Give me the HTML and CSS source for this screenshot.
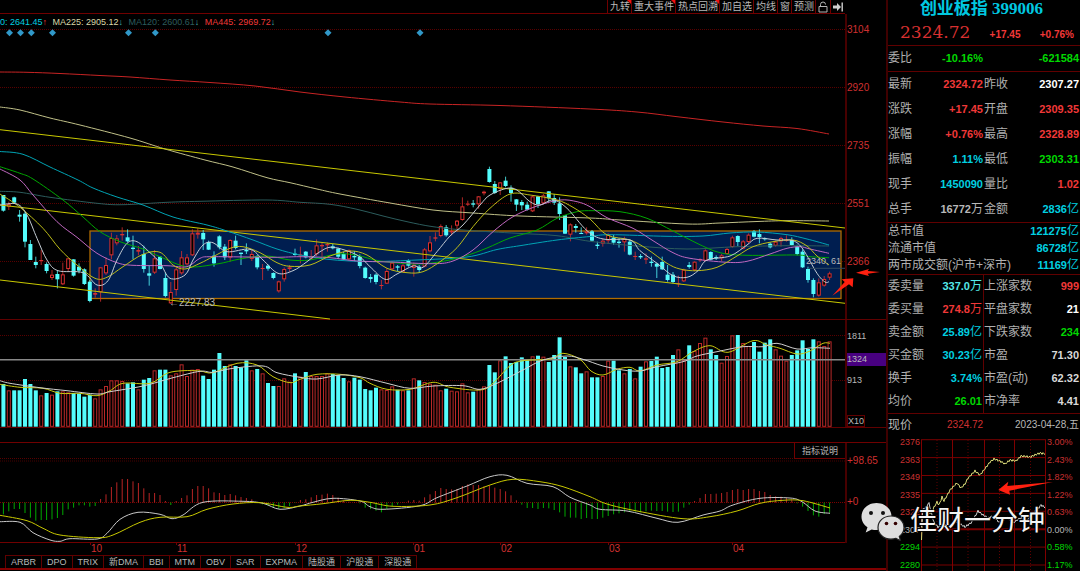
FILE: index.html
```html
<!DOCTYPE html>
<html lang="zh-CN">
<head>
<meta charset="utf-8">
<title>创业板指 399006</title>
<link rel="stylesheet" href="styles.css">
</head>
<body>
<div class="terminal">
  <main class="charts">
    <nav class="toolbar">
      <button class="tool flagged">九转</button>
      <button class="tool flagged">重大事件</button>
      <button class="tool flagged">热点回溯</button>
      <button class="tool">加自选</button>
      <button class="tool">均线</button>
      <button class="tool">窗</button>
      <button class="tool">预测</button>
      <button class="tool tool-icon" aria-label="锁定"><svg class="icon" viewBox="0 0 10 12"><path d="M1 5.5h8v5.5h-8zM2.5 5.5v-2a2.5 2.5 0 0 1 5 0" fill="none" stroke="#b4b4b4"/></svg></button>
      <button class="tool tool-icon" aria-label="末端"><svg class="icon" viewBox="0 0 10 12"><path d="M0 4.5h4V2l4 4-4 4V7.500H0z" fill="#d0d0d0"/><path d="M9.200 1.500v9" stroke="#d0d0d0" stroke-width="1.400"/></svg></button>
    </nav>

    <section class="panel price-panel">
      <div class="plot">
        <svg id="price" class="price-svg" viewBox="0 14 845 305" preserveAspectRatio="none"></svg>
        <div class="legend">
          <span class="cyan">0: 2641.45<i class="up">↑</i></span>
          <span class="cream">MA225: 2905.12<i>↓</i></span>
          <span class="teal">MA120: 2600.61<i>↓</i></span>
          <span class="red">MA445: 2969.72<i>↓</i></span>
        </div>
        <span class="mark mark-low">←2227.83</span>
        <span class="mark mark-last">2340, 61</span>
      </div>
      <div class="axis price-axis"><span>3104</span><span>2920</span><span>2735</span><span>2551</span><span>2366</span></div>
    </section>

    <section class="panel volume-panel">
      <div class="plot"><svg id="volume" class="volume-svg" viewBox="0 320 845 107" preserveAspectRatio="none"></svg></div>
      <div class="axis volume-axis"><span>1811</span><span class="current">1324</span><span>913</span><span class="unit">X10</span></div>
    </section>

    <div class="spacer"></div>

    <section class="panel macd-panel">
      <div class="plot">
        <svg id="macd" class="macd-svg" viewBox="0 443 845 99" preserveAspectRatio="none"></svg>
        <button class="explain">指标说明</button>
      </div>
      <div class="axis macd-axis"><span>+98.65</span><span>+0</span></div>
    </section>

    <div class="months"><span></span><span>10</span><span>11</span><span>12</span><span>01</span><span>02</span><span>03</span><span>04</span></div>

    <nav class="tabs">
      <button class="tab">ARBR</button><button class="tab">DPO</button><button class="tab">TRIX</button><button class="tab">新DMA</button><button class="tab">BBI</button><button class="tab">MTM</button><button class="tab">OBV</button><button class="tab">SAR</button><button class="tab">EXPMA</button><button class="tab">陆股通</button><button class="tab">沪股通</button><button class="tab">深股通</button>
    </nav>
  </main>

  <aside class="quote">
    <header class="head">
      <h1 class="name">创业板指 399006</h1>
      <div class="last"><strong class="price">2324.72</strong><span>+17.45</span><span>+0.76%</span></div>
    </header>
    <table class="facts tall">
      <tr><th>委比</th><td class="green">-10.16%</td><th></th><td class="green">-621584</td></tr>
    </table>
    <table class="facts tall">
      <tr><th>最新</th><td class="red">2324.72</td><th>昨收</th><td class="white">2307.27</td></tr>
      <tr><th>涨跌</th><td class="red">+17.45</td><th>开盘</th><td class="red">2309.35</td></tr>
      <tr><th>涨幅</th><td class="red">+0.76%</td><th>最高</th><td class="red">2328.89</td></tr>
      <tr><th>振幅</th><td class="cyan">1.11%</td><th>最低</th><td class="green">2303.31</td></tr>
      <tr><th>现手</th><td class="cyan">1450090</td><th>量比</th><td class="red">1.02</td></tr>
      <tr><th>总手</th><td class="grey">16772<em>万</em></td><th>金额</th><td class="cyan">2836<em>亿</em></td></tr>
    </table>
    <table class="facts short">
      <tr><th colspan="3">总市值</th><td class="cyan">121275<em>亿</em></td></tr>
      <tr><th colspan="3">流通市值</th><td class="cyan">86728<em>亿</em></td></tr>
      <tr><th colspan="3">两市成交额(沪市+深市)</th><td class="cyan">11169<em>亿</em></td></tr>
    </table>
    <table class="facts medium split">
      <tr><th>委卖量</th><td class="aqua">337.0<em>万</em></td><th>上涨家数</th><td class="red">999</td></tr>
      <tr><th>委买量</th><td class="red">274.8<em>万</em></td><th>平盘家数</th><td class="white">21</td></tr>
      <tr><th>卖金额</th><td class="cyan">25.89<em>亿</em></td><th>下跌家数</th><td class="green">234</td></tr>
      <tr><th>买金额</th><td class="cyan">30.23<em>亿</em></td><th>市盈</th><td class="pale">71.30</td></tr>
      <tr><th>换手</th><td class="cyan">3.74%</td><th>市盈(动)</th><td class="pale">62.32</td></tr>
      <tr><th>均价</th><td class="green">26.01</td><th>市净率</th><td class="pale">4.41</td></tr>
    </table>
    <div class="now"><span>现价</span><span class="now-price">2324.72</span><time class="date">2023-04-28,五</time></div>
    <div class="mini">
      <div class="scale"><span>2376</span><span>2363</span><span>2349</span><span>2335</span><span>2322</span><span class="grey">2307</span><span class="green">2294</span><span class="green">2280</span></div>
      <svg id="intraday" class="mini-svg" viewBox="921 436 125 135" preserveAspectRatio="none"></svg>
      <div class="scale percent"><span>3.00%</span><span>2.43%</span><span>1.82%</span><span>1.22%</span><span>0.63%</span><span class="grey">0.00%</span><span class="green">0.58%</span><span class="green">1.17%</span></div>
      <div class="watermark">
        <svg class="wechat" viewBox="861 501 44 39">
          <path d="M876.500 502c-8.500 0-15 6-15 13.500 0 4.500 2.300 8.300 6 10.800l-1.800 5.200 6-3c1.500.400 3 .600 4.800.600 8.500 0 15-6 15-13.600S885 502 876.500 502z" fill="#dedede"/>
          <circle cx="871" cy="512" r="2" fill="#111"/><circle cx="883" cy="512" r="2" fill="#111"/>
          <path d="M891 515c-7.500 0-13 5.200-13 11.500s5.500 11.700 13 11.700c1.800 0 3.500-.300 5-.800l4.500 2.300-1.200-4.200c3-2.200 4.700-5.400 4.700-9 0-6.300-5.500-11.500-13-11.500z" fill="#dedede" stroke="#222" stroke-width="1.200"/>
          <circle cx="886.500" cy="522.500" r="1.800" fill="#300"/><circle cx="895.500" cy="522.500" r="1.800" fill="#300"/>
        </svg>
        <span>佳财一分钟</span>
      </div>
    </div>
  </aside>
</div>
<script src="charts.js"></script>
</body>
</html>
```
FILE: styles.css
```css
* { box-sizing: border-box; }
body {
  margin: 0;
  background: #000;
  color: #b8b8b8;
  font: 9px/12px "Liberation Sans", "Noto Sans CJK SC", sans-serif;
}
button {
  margin: 0;
  padding: 0;
  border: 0;
  background: none;
  color: inherit;
  font: inherit;
}
svg { display: block; }

.terminal { display: flex; min-height: 100vh; }
.charts { flex: 1; min-width: 0; }
.quote { flex: none; width: 194px; border-left: 2px solid #400000; }

.red { color: #f03838; }
.green { color: #00d800; }
.cyan { color: #00d0e0; }
.aqua { color: #54e8e8; }
.white { color: #fff; }
.pale { color: #d8d8d8; }
.grey { color: #b8b8b8; }
.cream { color: #d8d8a8; }
.teal { color: #2c5c5c; }

.toolbar {
  display: flex;
  justify-content: flex-end;
  height: 14px;
  margin-right: 41px;
  border-bottom: 1px solid #700000;
}
.tool {
  position: relative;
  padding: 0 1px 0 2px;
  border-left: 1px solid #700000;
  font-size: 10px;
  line-height: 12px;
  white-space: nowrap;
}
.tool-icon { padding: 0 2px; }
.flagged::after {
  content: "";
  position: absolute;
  top: 0;
  right: 0;
  border-top: 4px solid #f01010;
  border-left: 4px solid transparent;
}
.icon { width: 10px; height: 12px; }

.panel { display: flex; border-bottom: 1px solid #600000; }
.plot { position: relative; z-index: 1; flex: 1; min-width: 0; }
.plot > svg { width: 100%; }
.price-svg { height: 305px; overflow: visible; }
.volume-svg { height: 107px; }
.macd-svg { height: 99px; }
.axis {
  display: flex;
  flex-direction: column;
  flex: none;
  align-items: flex-start;
  width: 41px;
  border-left: 2px solid #480000;
  color: #d03030;
  font-size: 10px;
}
.price-axis { gap: 46px; padding-top: 10px; }
.volume-axis { padding-top: 10px; color: #b8b8b8; font-size: 9px; }
.current {
  align-self: stretch;
  margin: 11px 0 8px;
  background: #480080;
  line-height: 13px;
}
.unit { margin-top: auto; border: 1px solid #600000; line-height: 10px; }
.macd-panel { border-bottom: 0; }
.macd-axis { gap: 29px; padding-top: 12px; }
.macd-panel .plot { border-bottom: 1px solid #700000; }
.spacer { height: 15px; border-bottom: 1px solid #700000; }

.legend { position: absolute; top: 2px; left: 0; display: flex; gap: 5px; white-space: nowrap; }
.legend i { display: inline-block; width: 5px; color: #40b0b0; font-style: normal; }
.legend .up { color: #f03838; }
.mark { position: absolute; font-size: 10px; color: #b8b8b8; }
.mark-low { top: 283px; left: 20%; }
.mark-last { top: 241px; right: 4px; font-size: 9px; }
.explain {
  position: absolute;
  top: 0;
  right: 0;
  width: 51px;
  height: 16px;
  border: 1px solid #700000;
  border-top: 0;
  border-right: 0;
  background: #000;
}

.months {
  display: grid;
  grid-template-columns: 90fr 86fr 119fr 118fr 87fr 108fr 124fr 113fr;
  height: 12px;
  margin-right: 41px;
  color: #d03030;
  font-size: 10px;
}
.months span { position: relative; padding-left: 1px; }
.months span + span::before {
  content: "";
  position: absolute;
  top: 0;
  left: 0;
  height: 2px;
  border-left: 1px solid #700000;
}
.tabs { display: flex; height: 15px; padding-left: 5px; border-bottom: 2px solid #800000; }
.tab { padding: 0 5px; border: 1px solid #600000; border-width: 1px 0 0 1px; white-space: nowrap; }
.tab:last-child { border-right-width: 1px; }

.head { height: 45px; text-align: center; }
.name {
  margin: 0;
  padding-right: 5px;
  color: #00c8e0;
  font: bold 17px/18px "Liberation Serif", "Noto Sans CJK SC", serif;
  white-space: nowrap;
}
.last {
  display: flex;
  align-items: baseline;
  justify-content: space-between;
  padding: 0 6px 0 12px;
  color: #f03838;
  font: bold 10px/28px "Liberation Sans", sans-serif;
}
.price { color: #d83030; font: 17px/28px "DejaVu Serif", serif; }

.facts {
  width: 100%;
  table-layout: fixed;
  border-collapse: separate;
  border-spacing: 0;
  border-top: 1px solid #600000;
  white-space: nowrap;
}
.facts th, .facts td { padding: 0; }
.facts th { width: 25%; color: #b0b0b0; font-size: 12px; font-weight: 400; text-align: left; }
.facts th:first-child { width: 20%; }
.facts td { width: 30%; padding-right: 1px; font-size: 11px; font-weight: 700; text-align: right; }
.facts td:last-child { width: 25%; }
.facts em { font-size: 12px; font-style: normal; font-weight: 400; }
.tall tr { height: 25px; line-height: 25px; }
.short tr { height: 17px; line-height: 17px; }
.medium tr { height: 23px; line-height: 23px; }
.split td:nth-child(2) { border-right: 1px solid #600000; }

.now {
  display: flex;
  align-items: center;
  height: 23px;
  padding-right: 1px;
  border-top: 1px solid #600000;
  font-size: 12px;
}
.now-price { margin-left: 35px; color: #d03030; font-size: 10px; }
.date { margin-left: auto; font-size: 10px; }
.mini { position: relative; display: grid; grid-template-columns: 33px 1fr 34px; height: 135px; }
.mini-svg { width: 100%; height: 135px; overflow: visible; }
.scale { display: flex; flex-direction: column; justify-content: space-between; padding-right: 1px; color: #c83030; text-align: right; }
.scale.percent { padding-left: 1px; text-align: left; }
.scale .grey { color: #b8b8b8; }
.watermark {
  position: absolute;
  top: 65px;
  left: -27px;
  display: flex;
  align-items: center;
  gap: 5px;
  z-index: 2;
  color: #f4f4f4;
  font-size: 27px;
  line-height: 40px;
  text-shadow: 1px 1px 1px #000, -1px -1px 1px #000;
  white-space: nowrap;
}
.wechat { width: 44px; height: 39px; }
```
FILE: charts.js
```js
// Horizontal spacing of the trading days.
const FIRST = 3.4, STEP = 5.4;
const dayX = i => FIRST + STEP * i;

// Candles: direction (c falls, r rises), high, body top, body bottom, low, in thirds of a pixel below y = 150.
const candles = `c135 135 182 185,r155 162 170 180,c140 142 158 162,c180 194 200 215,c185 191 275 292,c270 282 330 330,c320 336 345 355,r300 330 332 345,c337 342 363 370,r360 374 384 390,c362 372 388 415,r338 373 403 405,r325 325 357 365,c328 328 377 380,c340 350 362 370,c355 358 402 405,c390 395 453 457,r415 429 434 443,r352 352 427 455,r322 345 370 375,r248 264 316 328,r255 265 280 286,r232 252 256 272,c238 262 274 276,c257 293 297 328,r288 300 305 316,c287 312 357 368,c345 370 377 407,r300 325 368 372,c318 320 357 358,c368 384 438 442,r396 426 460 462,r350 358 420 437,r303 322 370 374,r312 322 343 347,r238 250 316 318,r235 248 254 266,c240 249 268 300,c272 276 299 300,c304 317 340 350,c256 259 292 298,c282 290 322 330,r268 270 323 335,c257 272 294 298,c308 308 312 345,c280 300 304 312,r300 312 327 333,c315 318 352 358,r342 354 357 390,c343 347 356 362,c367 369 384 388,r392 394 424 428,r352 357 388 395,r345 352 357 365,c296 311 315 317,r290 313 317 340,c303 305 322 325,r300 318 326 330,r268 286 313 318,r278 285 289 320,r278 282 286 305,c282 289 295 298,c293 296 320 327,c305 312 328 330,r298 301 328 332,c303 318 322 333,c313 320 348 355,c350 353 384 386,c372 381 387 398,c370 374 396 403,r390 405 408 418,r355 363 401 402,r335 338 358 362,c345 349 353 364,r342 346 365 367,c328 333 347 350,r338 344 354 380,c345 350 360 368,r294 298 350 352,r258 277 304 307,r247 262 266 274,r223 228 258 262,c225 232 256 260,r226 243 247 256,r210 212 227 245,r142 169 210 212,r152 161 164 168,c150 160 164 172,r138 139 163 176,r122 125 130 136,c50 57 96 98,c93 102 129 132,r96 97 117 135,c80 92 108 112,c106 114 129 155,c147 148 164 183,c150 156 166 180,c155 164 179 182,r136 139 184 186,c138 139 162 174,r132 136 160 163,c123 124 145 158,c132 144 158 165,c142 160 192 210,c195 196 251 252,r220 223 254 274,c222 228 234 248,c232 249 251 252,r232 244 250 254,c240 244 272 276,c275 284 288 297,r265 272 281 290,r250 254 272 282,c255 263 278 284,c265 275 279 293,r260 267 277 305,c268 275 314 316,r305 318 321 330,c312 318 322 327,r310 325 329 342,c320 335 339 350,c338 341 350 384,c320 336 358 360,c345 374 390 395,c366 374 396 400,r377 400 403 411,r356 359 394 396,c336 345 351 356,r334 335 361 364,r325 327 331 336,r298 301 333 334,c304 306 329 331,c316 321 325 330,r312 316 325 333,r294 297 312 314,r257 262 291 293,c256 258 276 288,r270 274 296 298,r250 254 276 280,c240 244 260 262,c238 252 261 280,c262 264 268 272,c277 281 292 295,r272 275 287 290,r260 264 274 290,r256 270 273 275,c262 270 285 287,c284 290 312 316,c298 305 352 354,c350 357 390 398,c385 390 432 442,r385 397 437 440,r378 387 407 410,r365 370 383 390`.split(",").map(s => [s[0], ...s.slice(1).split(" ").map(Number)]);

// Volume bar tops, in thirds of a pixel below y = 320.
const volumes = [192,211,211,211,177,192,211,226,219,224,214,214,217,219,221,230,224,235,208,198,181,181,183,190,187,208,179,174,151,149,149,166,160,133,168,149,147,167,177,149,99,138,133,138,142,121,151,147,160,189,198,198,175,185,160,170,156,168,168,168,160,162,165,174,184,173,179,207,211,203,208,210,199,209,211,211,175,181,186,191,194,211,206,212,214,190,217,215,207,199,135,157,121,109,129,126,112,120,109,107,110,126,105,52,111,139,142,160,154,172,172,168,122,122,151,160,147,175,140,124,123,110,144,141,105,88,120,76,93,69,53,88,105,128,108,46,45,69,78,66,95,68,58,88,107,122,105,91,61,87,58,64,78,64];

// Ends of the MACD bars, same unit and base; the zero line is at 547.
const bars = [583,574,567,567,579,593,602,600,600,598,594,585,568,563,556,556,560,558,537,523,501,487,477,477,484,489,505,519,519,525,543,555,543,534,526,507,498,498,505,517,519,525,522,526,531,534,538,547,553,558,562,566,565,558,549,540,538,532,525,524,521,525,533,541,545,546,550,563,567,572,577,567,558,554,546,542,540,542,532,523,513,504,507,508,507,498,493,495,495,499,497,503,507,514,526,541,554,564,564,567,564,565,570,577,590,593,593,597,594,597,597,593,588,583,580,577,574,575,577,574,572,573,573,575,576,575,563,554,543,534,522,522,521,519,516,510,507,510,507,507,513,516,525,529,530,534,539,550,560,573,586,590,582,578];

const parse = s => s.split(" ").map(p => p.split(",").map(Number));

// Smooth path through the points (Catmull-Rom as cubic Béziers).
function smooth(text, color, width = 1) {
  const p = parse(text);
  let d = `M${p[0]}`;
  for (let i = 0; i < p.length - 1; i++) {
    const a = p[i - 1] || p[i], b = p[i], c = p[i + 1], e = p[i + 2] || c;
    d += `C${b[0] + (c[0] - a[0]) / 6},${b[1] + (c[1] - a[1]) / 6} ${c[0] - (e[0] - b[0]) / 6},${c[1] - (e[1] - b[1]) / 6} ${c}`;
  }
  return `<path d="${d}" fill="none" stroke="${color}" stroke-width="${width}"/>`;
}
const line = (x1, y1, x2, y2, color, extra = "") => `<path d="M${x1} ${y1}L${x2} ${y2}" stroke="${color}" fill="none" ${extra}/>`;
const dotted = (y, color = "#7c0000") => line(0, y, 845, y, color, 'stroke-dasharray="1 1"');

const RED = "#d83030", CYAN = "#54fcfc", GOLD = "#c8c800";

function drawPrice() {
  let s = [29.5, 87.5, 145.5, 203.5, 261.5].map(y => dotted(y, "#580000")).join("");
  s += '<rect x="90" y="231" width="751" height="67.500" fill="#001e50" stroke="#b06c00" stroke-width="1.300"/>';
  candles.forEach(([kind, high, top, bottom, low], i) => {
    const y = v => 150 + v / 3, x = dayX(i), h = Math.max((bottom - top) / 3, 1);
    const color = kind === "c" ? CYAN : RED;
    s += line(x, y(high), x, y(low), color, 'stroke-opacity=".8"');
    if (kind === "c" || h < 2) s += `<rect x="${x - 2}" y="${y(top)}" width="4" height="${h}" fill="${color}"/>`;
    else s += `<rect x="${x - 1.5}" y="${y(top) + .5}" width="3" height="${h - 1}" fill="#000" stroke="${RED}"/>`;
  });
  s += smooth("0,72 27,72.3 60,73.5 100,75.5 130,77 170,80 210,82.5 255,86 300,92 345,97 400,102 430,104 500,105.5 590,109 637,112 677,116.7 723,122 763,126 797,128.5 829,134", "#c82424");
  s += smooth("0,107 20,110 50,118 80,125 130,138 165,149 205,160 233,167 267,177.7 290,182.7 317,189 340,194 390,203 433,210 473,213 520,216 590,218 620,220 687,224 720,223 757,221.5 787,220.7 829,221", "#c0c088");
  s += smooth("0,191.3 20,192.3 50,197.3 97,203.3 123,204.7 167,202.3 200,201.3 267,200 300,202.3 330,204.3 357,209.3 383,216 407,221.7 433,226.7 467,230.3 517,233.3 557,235.7 590,241.3 637,246 687,249 737,246.7 787,245.7 829,246", "#2c5c5c");
  s += line(0, 129.7, 845, 228, GOLD) + line(0, 205, 845, 303.3, GOLD) + line(0, 280, 330, 319, GOLD);
  s += smooth("0,151.5 23,154.3 50,167 78,180 93,188 117,197 143,205 173,217 207,225 227,231 253,240 277,249 300,255 325,259 350,261 377,261.5 417,260 467,257 497,249.5 520,245.7 557,240 590,236.5 610,234.7 667,236.3 703,236 730,233 757,232 787,234.7 807,239 829,245", "#00a4b4");
  s += smooth("0,166.7 20,173.3 33,179 63,200 83,217 100,231.7 120,241.7 143,249 160,256.7 187,266.7 217,264 240,259 267,256 290,260 310,260 337,254 357,255.3 380,261 413,264 437,262.3 463,256.7 487,248 510,238 537,230 557,218.3 577,211.7 593,210.7 620,211.7 647,218.3 673,231 697,243.3 720,252.7 747,255.3 797,255 810,256.7 829,257.7", "#00a800");
  s += smooth("0,169 20,180 33,195 57,221.7 77,237.3 97,253.3 117,262.7 133,265.3 167,265.7 187,266.7 200,258.3 213,256.7 273,257.3 300,256.7 330,257.7 357,261 390,262 433,263.7 453,261 473,250 493,231.7 513,216.7 537,206 560,200 577,201.7 590,206.7 607,217.7 633,228.3 653,240.7 673,252.7 690,258.3 727,262.3 747,261.3 770,254 787,248.3 800,246.7 810,249 829,253.3", "#c068c0");
  s += smooth("0,194 20,207.3 43,228.3 60,249.3 77,265 95,278.3 107,277.3 123,266.7 143,254.3 160,252.3 173,265 185,269 200,263.3 213,256.7 230,248.3 243,246.7 260,252.7 277,262.7 290,266.3 310,265 330,256 350,251 367,255 387,268.3 407,272.7 423,271.7 440,261.7 457,247.7 473,226.7 490,208.3 510,194 530,195 557,200 573,207.3 590,219 607,235 630,240 647,249 667,263.3 680,269 697,270.7 717,267.3 737,256 753,246.7 773,241.7 793,240 807,246 817,256 829,265", "#bcbc18");
  s += smooth("0,205 17,204 27,215 37,238.3 47,260 58,270.7 83,272.7 97,285 108,280.7 117,260 127,243.3 137,241.7 150,252.7 160,262.7 170,278.3 185,275 193,260 203,245 213,242.7 227,251.7 250,249.3 263,260 278,273.3 293,270.7 307,261.7 320,251.7 333,247.3 357,255 370,266.7 385,279.3 397,274 413,266 423,267.3 437,251.7 450,236 463,225 480,205 490,195 507,188.3 517,190 530,201.7 540,205 553,200 567,208.3 587,230.7 603,239 630,240 640,250.7 657,263.3 673,275.7 687,277.3 698,270.7 707,260 730,256 747,245 757,238.3 777,240 793,240.7 803,249.3 817,273.3 825,282 829,281.7", "#c4ccd4");
  s += line(808, 268.3, 845, 268.3, "#304a60");
  for (const x of [9.5, 20.5, 31.3, 52.5, 128.5, 155.3, 328, 420]) s += `<path d="M${x} 29.300l3.500 3.500-3.500 3.500-3.500-3.500z" fill="#3098c8"/>`;
  s += '<path d="M853.300 278.300L852.700 287.300 849 284.300 832.300 295.700 844.700 282 841.700 279.300zM856 272.700L869 269 867.700 271 880 272 867.700 273.700 869 276z" fill="#ff2010"/>';
  document.getElementById("price").innerHTML = s;
}

function drawVolume() {
  let s = dotted(335.5, "#580000") + dotted(380.5, "#580000");
  volumes.forEach((v, i) => {
    const x = dayX(i), y = 320 + v / 3;
    s += candles[i][0] === "c"
      ? `<rect x="${x - 2}" y="${y}" width="4" height="${426.7 - y}" fill="${CYAN}"/>`
      : `<rect x="${x - 1.5}" y="${y + .5}" width="3" height="${425.8 - y}" fill="#000" stroke="#b82828"/>`;
  });
  s += line(0, 359.8, 845, 359.8, "#888", 'stroke-width="1.500"');
  s += smooth("0,384.3 20,387.3 43,388.3 60,393.3 80,393.3 97,395.7 110,390.7 123,383.3 150,383.3 167,373.3 183,370.7 200,371 213,372.7 237,363.3 257,365 273,376.7 290,382.7 300,379.3 317,374.3 340,374.3 360,377.7 370,383.3 387,389.3 410,389.3 433,382.3 450,387.3 480,390 493,383.3 510,365.7 523,360.7 550,359 563,353.3 580,359.3 591,371 603,375 617,369.3 630,367.3 640,371 657,365 677,361.7 693,351.7 710,345.7 728,352.3 753,340.7 767,345 780,348.3 797,354 810,351 823,343.3 830,343.3", "#c8c810");
  s += smooth("0,380.7 10,383.3 40,387.7 67,390.7 97,394 110,391.7 143,386 173,377.7 200,371.3 213,372.3 233,368.3 263,366 277,372.7 300,377.3 317,379 340,375 360,376.7 387,383.3 410,388.3 433,386 463,385.7 480,389.3 497,383.3 523,370 543,360 567,356 583,359.3 603,366 623,370 640,371 657,366.7 683,361.7 697,356 717,351.7 743,346.7 763,346.7 777,343.3 797,349 813,347.7 830,348.3", "#d0d0d0");
  document.getElementById("volume").innerHTML = s;
}

function drawMacd() {
  let s = dotted(458.5, "#580000") + dotted(461, "#480000") + dotted(502.5);
  bars.forEach((v, i) => {
    s += line(dayX(i), 502.5, dayX(i), 320 + v / 3, v < 547 ? "#b82424" : "#00a800");
  });
  s += smooth("0,521.7 20,522.3 33,532.7 50,540 60,541.3 70,538.7 97,539 107,533.3 120,519.3 138,512.3 160,514.3 172,518.7 183,515 203,502.3 243,501.3 263,503.3 280,509.3 300,506 313,502.3 333,498.3 360,501 370,506.7 383,509.3 420,505.7 437,497.7 467,486 490,476.7 507,475.3 527,483.3 553,486.7 570,497.3 590,505 600,509.3 627,511 657,518.3 678,522.3 703,515 720,511 733,505 760,498.3 790,498 802,501.7 815,511 830,513.3", "#c8c8c8");
  s += smooth("0,515.3 27,520.7 43,528.3 60,535 97,537.7 113,535 140,522.3 160,517.3 187,516.7 207,509.3 233,504 260,502.7 287,507.3 300,506 323,503.7 350,500.3 370,502.3 393,506.3 430,505 457,497.7 490,485 513,479.3 540,481.7 563,486.7 590,496.7 607,504 637,511 683,518.7 710,516.7 737,511 760,503.3 783,500.3 803,500.7 830,508", "#c8c800");
  document.getElementById("macd").innerHTML = s;
}

// Intraday line with the tick-to-tick ripple between its turning points.
function ticks(text, color) {
  const p = parse(text);
  let d = "", n = 0;
  for (let i = 0; i < p.length - 1; i++) {
    const [a, b] = p[i], [c, e] = p[i + 1], steps = Math.max(1, Math.round(c - a));
    for (let k = 0; k < steps; k++, n++) {
      d += `${n ? "L" : "M"}${a + (c - a) * k / steps} ${b + (e - b) * k / steps + Math.sin(n * 2.3) * 1.1}`;
    }
  }
  return `<path d="${d}" fill="none" stroke="${color}"/>`;
}

function drawIntraday() {
  let s = "";
  for (let k = 0; k < 8; k++) {
    const y = 439.7 + 17.9 * k;
    s += line(921, y, 1046, y, "#780000", k === 5 ? 'stroke-width="2"' : "");
  }
  for (const x of [921.5, 952.5, 984.5, 1014.5, 1045.5]) s += line(x, 440, x, 571, "#800000");
  for (const x of [937, 968, 999.5, 1030.5]) s += line(x, 440, x, 571, "#600000", 'stroke-dasharray="1 2"');
  s += ticks("921.5,540 922.5,513 925,510 930,513 932,511 937,502 939,505 942,497 944,501 950,490 957,483 961,488 965,484 968,478 975,471 980,475 984,470 990,462 994,459 1000,461 1005,464 1010,460 1016,461 1021,456 1030,457 1040,453 1046,454", "#d8d878");
  s += ticks("921.5,527 922.5,510 926,507 929,503 931,511 934,523 938,527 943,525 950,525 957,522 965,527 972,522 978,511 983,515 988,518 993,516 1000,523 1007,517 1013,523 1020,518 1027,520 1033,513 1037,510 1041,505 1046,508", "#d0d0d0");
  s += '<path d="M998.300 490L1008.300 481.700 1007.300 486 1053 482 1009.300 490.700 1010 494.700z" fill="#ff2010"/>';
  document.getElementById("intraday").innerHTML = s;
}

drawPrice();
drawVolume();
drawMacd();
drawIntraday();
```
